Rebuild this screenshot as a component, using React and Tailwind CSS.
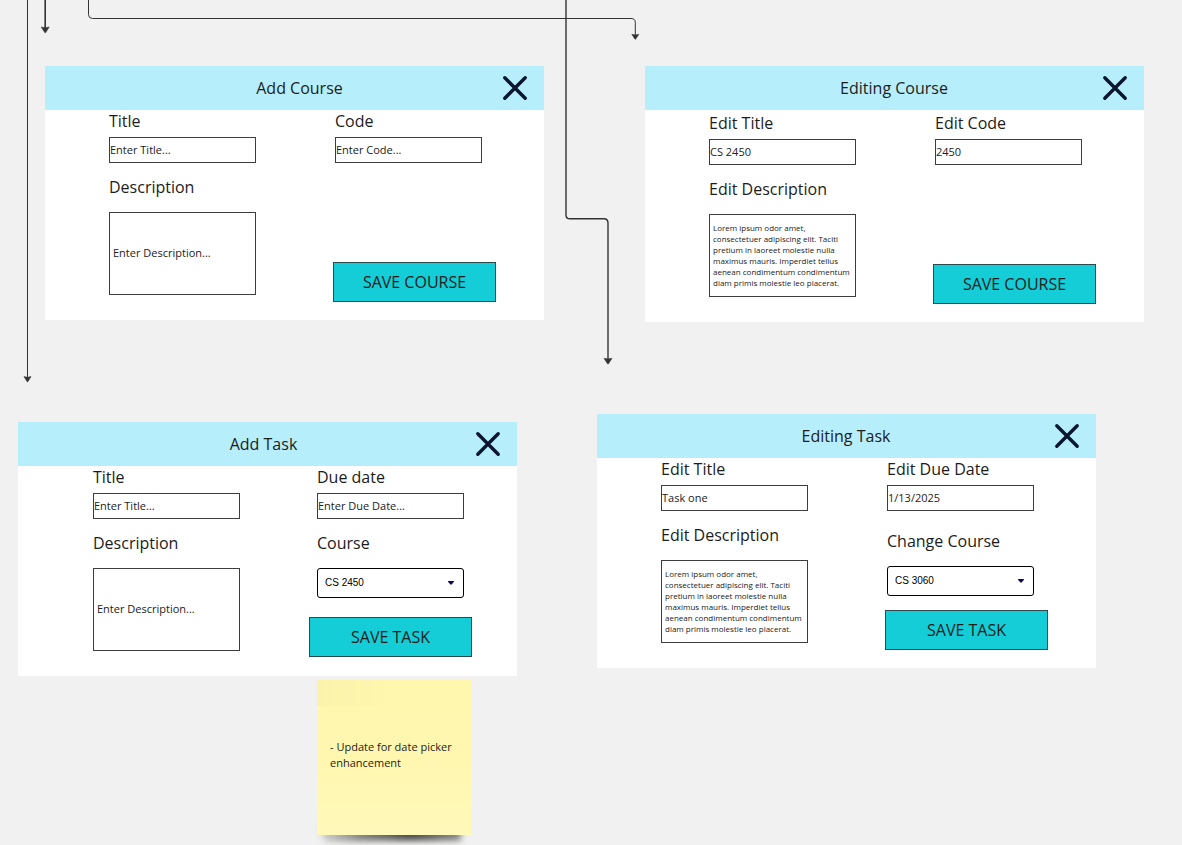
import { useId } from "react";

function CloseIcon() {
  return (
    <svg viewBox="0 0 26 26" className="size-[26px]" fill="none" stroke="#0b1530" strokeWidth="3.4" strokeLinecap="round" aria-hidden="true">
      <path d="M2.8 2.8 23.2 23.2M23.2 2.8 2.8 23.2" />
    </svg>
  );
}

function Dialog({ title, place, headerGrid = "grid-cols-[57px_1fr_58px]", bodyClass, children }) {
  return (
    <section className={`absolute w-[499px] bg-white ${place}`}>
      <header className={`grid h-11 items-center bg-[#b6effb] ${headerGrid}`}>
        <h2 className="col-start-2 text-center text-base">{title}</h2>
        <button type="button" aria-label="Close" className="flex justify-center">
          <CloseIcon />
        </button>
      </header>
      <form className={`flex ${bodyClass}`} onSubmit={(e) => e.preventDefault()}>
        {children}
      </form>
    </section>
  );
}

function Label({ htmlFor, children }) {
  return (
    <label htmlFor={htmlFor} className="block text-base leading-[22px] whitespace-nowrap">
      {children}
    </label>
  );
}

function TextField({ label, ...props }) {
  const id = useId();
  return (
    <div className="flex w-[147px] flex-col gap-[5px]">
      <Label htmlFor={id}>{label}</Label>
      <input
        id={id}
        type="text"
        className="h-[26px] w-full border border-[#3d3d3d] bg-white pb-0.5 text-[11px] text-[#222] placeholder:text-[#222] placeholder:opacity-100"
        {...props}
      />
    </div>
  );
}

function TextArea({ label, placeholder, defaultValue }) {
  const id = useId();
  const size = defaultValue ? "pt-[7px] text-[8px] leading-[11px]" : "pt-8 text-[11px] leading-4";
  return (
    <div className="flex w-[147px] flex-col gap-[14px]">
      <Label htmlFor={id}>{label}</Label>
      <textarea
        id={id}
        placeholder={placeholder}
        defaultValue={defaultValue}
        className={`h-[83px] w-full resize-none overflow-hidden border border-[#3d3d3d] bg-white px-[3px] text-[#222] placeholder:text-[#222] placeholder:opacity-100 ${size}`}
      />
    </div>
  );
}

function CourseSelect({ label, value }) {
  const id = useId();
  return (
    <div className="flex w-[147px] flex-col gap-[14px]">
      <Label htmlFor={id}>{label}</Label>
      <div className="relative">
        <select
          id={id}
          defaultValue={value}
          className="block h-[30px] w-full appearance-none rounded-[3px] border border-black bg-white px-[7px] pb-0.5 font-['Liberation_Sans',Arial,sans-serif] text-[10px] text-black"
        >
          <option>CS 2450</option>
          <option>CS 3060</option>
        </select>
        <svg viewBox="0 0 6 4" className="pointer-events-none absolute top-[13px] right-[10px] h-1 w-1.5" fill="#0a0650" aria-hidden="true">
          <path d="M.4 0h5.2q.6.3.2.9L3.5 3.6q-.5.5-1 0L.2.9Q-.2.3.4 0z" />
        </svg>
      </div>
    </div>
  );
}

function SaveButton({ children }) {
  return (
    <button type="submit" className="h-10 w-[163px] border border-[#2b4a4d] bg-[#14cdd6] text-base">
      {children}
    </button>
  );
}

const LOREM =
  "Lorem ipsum odor amet, consectetuer adipiscing elit. Taciti pretium in laoreet molestie nulla maximus mauris. Imperdiet tellus aenean condimentum condimentum diam primis molestie leo placerat.";

function Connectors() {
  return (
    <svg className="pointer-events-none absolute inset-0 size-full" fill="none" stroke="#333" aria-hidden="true">
      <path d="M27.5 0V378" strokeWidth="1" />
      <path d="M45.2 0V28" strokeWidth="1.6" />
      <path d="M88.5 0V14.5Q88.5 18.5 92.5 18.5H631Q635.3 18.5 635.3 22.5V35" strokeWidth="1" />
      <path d="M566 0V215Q566 218.8 570 218.8H604Q608 218.8 608 223V360" strokeWidth="1.4" />
      <g fill="#333" stroke="#333" strokeWidth=".6">
        <path d="M24 376.6Q27.5 378 31 376.6L27.8 381.8H27.2z" />
        <path d="M41.2 27Q45.2 28.4 49.2 27L45.5 32.8H45z" />
        <path d="M631.8 34.3Q635.3 35.5 638.8 34.3L635.6 39.2H635z" />
        <path d="M604 358.3Q608 359.5 612 358.3L608.3 364H607.7z" />
      </g>
    </svg>
  );
}

function StickyNote() {
  return (
    <aside className="absolute top-[680px] left-[317px] w-[154px]">
      <svg viewBox="0 0 154 20" className="absolute top-[148px] left-0 h-5 w-full overflow-visible" aria-hidden="true">
        <defs>
          <filter id="note-blur" x="-10%" y="-50%" width="120%" height="200%">
            <feGaussianBlur stdDeviation="3" />
          </filter>
          <linearGradient id="note-shade">
            <stop offset="0" stopColor="#444" stopOpacity=".15" />
            <stop offset=".3" stopColor="#444" stopOpacity=".65" />
            <stop offset=".65" stopColor="#333" stopOpacity=".9" />
            <stop offset="1" stopColor="#444" stopOpacity=".6" />
          </linearGradient>
        </defs>
        <path d="M2 0H144V13Q90 12 8 14z" fill="url(#note-shade)" filter="url(#note-blur)" />
      </svg>
      <div className="relative flex h-[155px] items-center bg-linear-to-b from-[#fff7ae] via-[#fff7b0] to-[#fff9b9] px-[13px] pb-1.5">
        <div className="absolute top-0 left-0 h-[26px] w-[75px] bg-linear-to-r from-[#fbf2ab] to-[#fff7ae]" />
        <p className="relative text-[11px] leading-4">- Update for date picker enhancement</p>
      </div>
    </aside>
  );
}

export default function App() {
  return (
    <main className="relative min-h-screen overflow-hidden bg-[#f1f1f1] font-['Open_Sans','Noto_Sans',sans-serif] text-[#1c1c1c]">
      <Connectors />

      <Dialog
        title="Add Course"
        place="top-[66px] left-[45px]"
        headerGrid="grid-cols-[68px_1fr_58px]"
        bodyClass="gap-[77px] pb-[25px] pl-16"
      >
        <div className="flex flex-col gap-[13px]">
          <TextField label="Title" placeholder="Enter Title..." />
          <TextArea label="Description" placeholder="Enter Description..." />
        </div>
        <div className="-mb-[7px] flex flex-col justify-between">
          <div className="pl-0.5">
            <TextField label="Code" placeholder="Enter Code..." />
          </div>
          <SaveButton>SAVE COURSE</SaveButton>
        </div>
      </Dialog>

      <Dialog title="Editing Course" place="top-[66px] left-[645px]" bodyClass="gap-[77px] pt-0.5 pb-[25px] pl-16">
        <div className="flex flex-col gap-[13px]">
          <TextField label="Edit Title" defaultValue="CS 2450" />
          <TextArea label="Edit Description" defaultValue={LOREM} />
        </div>
        <div className="-mb-[7px] flex flex-col justify-between">
          <div className="pl-0.5">
            <TextField label="Edit Code" defaultValue="2450" />
          </div>
          <SaveButton>SAVE COURSE</SaveButton>
        </div>
      </Dialog>

      <Dialog
        title="Add Task"
        place="top-[422px] left-[18px]"
        headerGrid="grid-cols-[50px_1fr_58px]"
        bodyClass="gap-[69px] pb-[25px] pl-[75px]"
      >
        <div className="flex flex-col gap-[13px]">
          <TextField label="Title" placeholder="Enter Title..." />
          <TextArea label="Description" placeholder="Enter Description..." />
        </div>
        <div className="-mb-1.5 flex flex-col justify-between">
          <div className="flex flex-col gap-[13px] pl-2">
            <TextField label="Due date" placeholder="Enter Due Date..." />
            <CourseSelect label="Course" value="CS 2450" />
          </div>
          <SaveButton>SAVE TASK</SaveButton>
        </div>
      </Dialog>

      <Dialog title="Editing Task" place="top-[414px] left-[597px]" bodyClass="gap-[77px] pb-[25px] pl-16">
        <div className="flex flex-col gap-[13px]">
          <TextField label="Edit Title" defaultValue="Task one" />
          <TextArea label="Edit Description" defaultValue={LOREM} />
        </div>
        <div className="-mb-[7px] flex flex-col justify-between">
          <div className="flex flex-col gap-[19px] pl-0.5">
            <TextField label="Edit Due Date" defaultValue="1/13/2025" />
            <CourseSelect label="Change Course" value="CS 3060" />
          </div>
          <SaveButton>SAVE TASK</SaveButton>
        </div>
      </Dialog>

      <StickyNote />
    </main>
  );
}
